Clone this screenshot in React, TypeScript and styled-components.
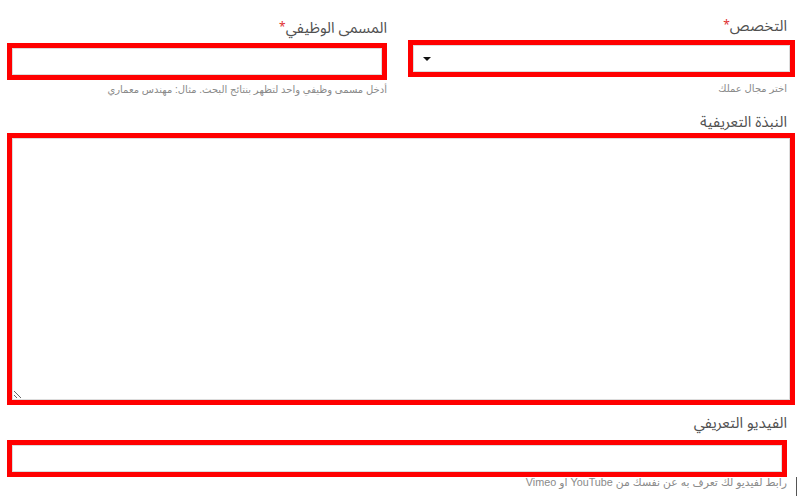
import React from "react";
import styled, { createGlobalStyle } from "styled-components";

const GlobalStyle = createGlobalStyle`
  html, body {
    margin: 0;
    padding: 0;
    background: #ffffff;
  }
  body {
    font-family: "Noto Sans Arabic", "DejaVu Sans", sans-serif;
  }
`;

const Page = styled.div`
  direction: rtl;
  width: 801px;
  height: 496px;
  box-sizing: border-box;
  padding: 16px 14px 0 7px;
  position: relative;
  overflow: hidden;
`;

const Row = styled.div`
  display: grid;
  grid-template-columns: 379px 380px;
  column-gap: 21px;
`;

const Field = styled.div<{ $top?: number }>`
  display: flex;
  flex-direction: column;
  margin-top: ${(p) => p.$top ?? 0}px;
`;

const Label = styled.label`
  font-size: 15px;
  line-height: 20px;
  height: 20px;
  color: #505050;
`;

const Star = styled.span`
  color: #e03030;
  font-size: 12px;
  vertical-align: top;
`;

const Highlight = styled.div<{ $gap: number; $bleed?: number }>`
  margin-top: ${(p) => p.$gap}px;
  margin-right: ${(p) => -(p.$bleed ?? 0)}px;
  border: 5px solid #ff0000;
  display: flex;
  background: #ffffff;
`;

const TextInput = styled.input`
  flex: 1;
  height: 27px;
  box-sizing: border-box;
  border: 1px solid #dcdcdc;
  outline: none;
  padding: 0 8px;
  font: inherit;
  font-size: 13px;
  background: #fff;
`;

const SelectBox = styled.div`
  flex: 1;
  height: 27px;
  box-sizing: border-box;
  border: 1px solid #dcdcdc;
  display: flex;
  align-items: center;
  justify-content: flex-end;
  padding-left: 9px;
`;

const Caret = styled.span`
  width: 0;
  height: 0;
  border-left: 4px solid transparent;
  border-right: 4px solid transparent;
  border-top: 4px solid #111;
`;

const TextArea = styled.textarea`
  flex: 1;
  height: 262px;
  box-sizing: border-box;
  border: 1px solid #dcdcdc;
  outline: none;
  resize: vertical;
  font: inherit;
  padding: 6px 8px;
  margin: 0;
  display: block;
`;

const Hint = styled.div<{ $gap: number; $size?: number }>`
  margin-top: ${(p) => p.$gap}px;
  font-family: "Liberation Sans", "DejaVu Sans", sans-serif;
  font-size: ${(p) => p.$size ?? 10}px;
  line-height: 14px;
  color: #8a8a8a;
`;

const Section = styled.div<{ $top: number }>`
  display: flex;
  flex-direction: column;
  margin-top: ${(p) => p.$top}px;
  width: 780px;
`;

const EdgeMark = styled.div`
  position: absolute;
  left: 796px;
  top: 477px;
  width: 1px;
  height: 19px;
  background: #555;
`;

export default function App() {
  return (
    <>
      <GlobalStyle />
      <Page>
        <Row>
          <Field>
            <Label>
              التخصص<Star>*</Star>
            </Label>
            <Highlight $gap={4} $bleed={8}>
              <SelectBox>
                <Caret />
              </SelectBox>
            </Highlight>
            <Hint $gap={5}>اختر مجال عملك</Hint>
          </Field>
          <Field $top={2}>
            <Label>
              المسمى الوظيفي<Star>*</Star>
            </Label>
            <Highlight $gap={5}>
              <TextInput type="text" />
            </Highlight>
            <Hint $gap={3}>أدخل مسمى وظيفي واحد لتظهر بنتائج البحث. مثال: مهندس معماري</Hint>
          </Field>
        </Row>

        <Section $top={15}>
          <Label>النبذة التعريفية</Label>
          <Highlight $gap={1} $bleed={8}>
            <TextArea />
          </Highlight>
        </Section>

        <Section $top={8}>
          <Label>الفيديو التعريفي</Label>
          <Highlight $gap={7}>
            <TextInput type="text" />
          </Highlight>
          <Hint $gap={-2} $size={10.8}>
            رابط لفيديو لك تعرف به عن نفسك من YouTube او Vimeo
          </Hint>
        </Section>
        <EdgeMark />
      </Page>
    </>
  );
}
